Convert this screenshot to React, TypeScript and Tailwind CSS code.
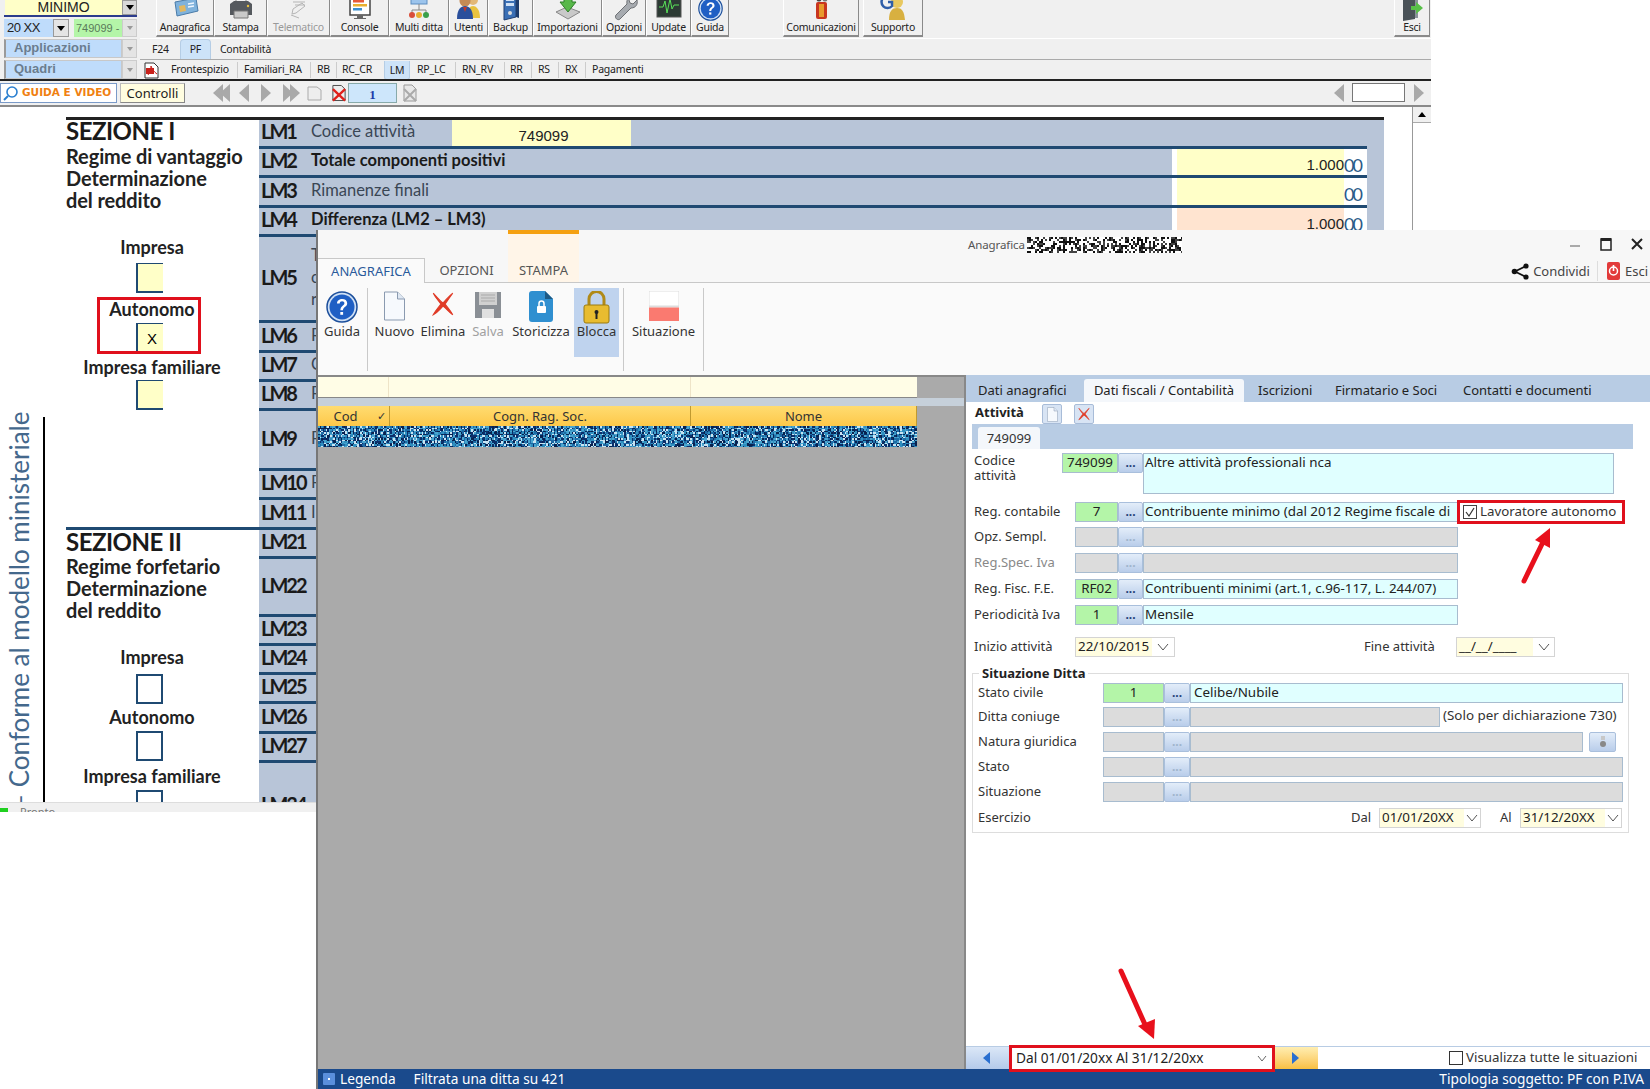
import React, { useMemo } from "react";

function Noise({ w, h, cell, colors, seed, className = "" }: { w: number; h: number; cell: number; colors: string[]; seed: number; className?: string }) {
  const paths = useMemo(() => {
    const d: string[] = colors.map(() => "");
    let s = seed;
    for (let y = 0; y < h; y += cell) {
      for (let x = 0; x < w; x += cell) {
        s = (s * 1103515245 + 12345) & 0x7fffffff;
        const i = (s >> 12) % colors.length;
        d[i] += `M${x} ${y}h${cell}v${cell}h-${cell}z`;
      }
    }
    return d;
  }, [w, h, cell, seed]);
  return (
    <svg width={w} height={h} className={className} shapeRendering="crispEdges">
      {paths.map((p, i) => (
        <path key={i} d={p} fill={colors[i]} />
      ))}
    </svg>
  );
}

const HelpIcon = ({ s = 30 }: { s?: number }) => (
  <svg width={s} height={s} viewBox="0 0 32 32">
    <circle cx="16" cy="16" r="15" fill="#cfe0f5" stroke="#1b4e9b" strokeWidth="1.5" />
    <circle cx="16" cy="16" r="12.5" fill="#1f5fc4" />
    <path d="M11 12.5c0-3 2.4-4.5 5.2-4.5s5 1.500 5 4.200c0 3.600-4.200 3.700-4.200 7h-2.600c0-4.500 4-4.600 4-7 0-1.200-1-1.900-2.300-1.900s-2.400.8-2.400 2.200z" fill="#fff" />
    <rect x="14.300" y="21" width="2.800" height="2.800" fill="#fff" />
  </svg>
);

const tbIcons: Record<string, React.ReactNode> = {
  Anagrafica: (
    <svg width="30" height="24" viewBox="0 0 30 24">
      <path d="M5 5l21-4 2 13-21 5z" fill="#7fb2dc" stroke="#4a7ba8" />
      <path d="M9 9l6-1 1 6-6 1z" fill="#e2b860" />
      <path d="M18 7l6-1M18 10l6-1" stroke="#eef6ff" strokeWidth="1.500" />
    </svg>
  ),
  Stampa: (
    <svg width="28" height="28" viewBox="0 0 28 28">
      <path d="M9 2h10v8H9z" fill="#f2f2f2" stroke="#888" />
      <path d="M3 11l4-3h14l4 3v11H3z" fill="#55595e" />
      <path d="M7 18h14v7H7z" fill="#c9c9c9" stroke="#777" />
      <circle cx="21" cy="13" r="1.200" fill="#e8c040" />
    </svg>
  ),
  Telematico: (
    <svg width="26" height="26" viewBox="0 0 26 26" fill="none" stroke="#b5b5b5">
      <path d="M5 4h10M7 7h12M9 10h10M7 14l9-6 3 3-9 7-4 1z" />
      <path d="M5 20l8 3" />
    </svg>
  ),
  Console: (
    <svg width="26" height="26" viewBox="0 0 26 26">
      <rect x="3" y="2" width="20" height="18" fill="#fff" stroke="#444" strokeWidth="1.500" />
      <rect x="6" y="5" width="11" height="2.500" fill="#e65a3a" />
      <rect x="6" y="9" width="14" height="2.500" fill="#e8b030" />
      <rect x="6" y="13" width="9" height="2.500" fill="#3a8fd0" />
      <path d="M10 20h6v3h3v1H7v-1h3z" fill="#666" />
    </svg>
  ),
  "Multi ditta": (
    <svg width="26" height="28" viewBox="0 0 26 28">
      <rect x="5" y="0" width="16" height="11" fill="#9cc4ec" stroke="#5d8dc0" />
      <path d="M13 11v6M6 20v-3h14v3" stroke="#888" fill="none" />
      <circle cx="6" cy="22" r="3" fill="#d94f3a" />
      <circle cx="13" cy="22" r="3" fill="#e8b030" />
      <circle cx="20" cy="22" r="3" fill="#3aa04a" />
    </svg>
  ),
  Utenti: (
    <svg width="28" height="28" viewBox="0 0 28 28">
      <circle cx="18" cy="7" r="5" fill="#e2b878" />
      <path d="M12 25c0-9 3-12 6-12s7 3 7 12z" fill="#e8c240" />
      <circle cx="10" cy="8" r="5.500" fill="#c48a55" />
      <path d="M6 6c1-4 7-4 8 0z" fill="#4a2a15" />
      <path d="M2 26c0-10 4-13 8-13s8 3 8 13z" fill="#2a4f9c" />
      <path d="M8 14l2 5 2-5z" fill="#c0392b" />
    </svg>
  ),
  Backup: (
    <svg width="22" height="28" viewBox="0 0 22 28">
      <path d="M4 2l12-2v24l-12 3z" fill="#3a6fb5" stroke="#203f70" />
      <path d="M16 0l3 2v23l-3-1z" fill="#1e3c6c" />
      <rect x="6" y="5" width="8" height="3" fill="#cfe0f5" />
      <rect x="6" y="10" width="8" height="3" fill="#cfe0f5" />
      <circle cx="10" cy="20" r="2" fill="#ddd" />
    </svg>
  ),
  Importazioni: (
    <svg width="30" height="28" viewBox="0 0 30 28">
      <path d="M3 19l11-5 13 5-12 7z" fill="#c9c9c9" stroke="#888" />
      <path d="M11 1h8v8h4l-8 10-8-10h4z" fill="#58b84a" stroke="#2f7f2a" />
    </svg>
  ),
  Opzioni: (
    <svg width="28" height="28" viewBox="0 0 28 28">
      <path d="M24 2l-5 5 1 3 3 1 4-4c1 4-1 8-6 8l-11 11c-2 2-6-1-4-4l11-11c-1-5 3-10 7-9z" fill="#a7abb0" stroke="#6d7074" />
    </svg>
  ),
  Update: (
    <svg width="28" height="28" viewBox="0 0 28 28">
      <rect x="2" y="2" width="24" height="22" fill="#2c3a34" stroke="#555" />
      <path d="M4 14h4l2-6 2 12 3-14 2 10 2-4h5" stroke="#58e058" fill="none" />
    </svg>
  ),
  Guida: <HelpIcon s={25} />,
  Comunicazioni: (
    <svg width="20" height="26" viewBox="0 0 20 26">
      <rect x="5" y="7" width="11" height="17" rx="2" fill="#c8361f" />
      <rect x="8" y="9" width="5" height="13" fill="#e89a2c" />
      <circle cx="8" cy="4" r="2.500" fill="#444" />
      <circle cx="14" cy="4" r="2.500" fill="#777" />
    </svg>
  ),
  Supporto: (
    <svg width="30" height="28" viewBox="0 0 30 28">
      <circle cx="19" cy="9" r="6" fill="#e8c860" />
      <path d="M11 27c0-9 3-12 8-12s7 3 8 12z" fill="#d8b040" />
      <path d="M14 5a6 6 0 1 0 0 8v-4h-4" fill="none" stroke="#2f5ea8" strokeWidth="2.500" />
    </svg>
  ),
  Esci: (
    <svg width="24" height="28" viewBox="0 0 24 28">
      <path d="M3 0h12v26l-12 2z" fill="#4a5258" />
      <path d="M15 1h3v24h-3z" fill="#8a9299" />
      <path d="M11 13h5v-4l7 6-7 6v-4h-5z" fill="#58c048" />
    </svg>
  ),
};

function TbBtn({ label, w, gray, cn = "" }: { label: string; w: string; gray?: boolean; cn?: string }) {
  return (
    <div className={`${w} ${cn} h-[37px] flex flex-col items-center justify-end border-l border-white border-r border-r-[#8a8a8a] border-b-2 border-b-[#8a8a8a] bg-[#f0f0f0] relative overflow-hidden`}>
      <div className="absolute left-0 right-0 -top-[10px] h-[31px] flex justify-center items-end">{tbIcons[label]}</div>
      <span className={`relative text-[10.5px] leading-[14px] pb-[1px] whitespace-nowrap tracking-[-0.25px] ${gray ? "text-[#999]" : "text-[#222]"}`}>{label}</span>
    </div>
  );
}

function Side({ label, cn }: { label: string; cn: string }) {
  return (
    <div className={`${cn} flex h-[19px]`}>
      <div className="flex-1 bg-[#bfdcfb] border border-[#c8c8c8] border-l-2 border-l-[#9a9a9a] pl-[8px] text-[13px] leading-[16px] font-bold text-[#6b7d8e]">{label}</div>
      <div className="w-[15px] bg-[#e4e4e4] flex items-center justify-center border border-[#ccc]">
        <span className="w-0 h-0 border-x-[3px] border-x-transparent border-t-[4px] border-t-[#9a9a9a]" />
      </div>
    </div>
  );
}

const Tri = ({ dir, c = "#a9a9a9", cn = "" }: { dir: "l" | "r"; c?: string; cn?: string }) => (
  <svg width="10" height="18" viewBox="0 0 10 18" className={cn}>
    <path d={dir === "l" ? "M10 0v18L0 9z" : "M0 0v18L10 9z"} fill={c} />
  </svg>
);

function Box({ filled, x, cn = "" }: { filled?: boolean; x?: boolean; cn?: string }) {
  return filled ? (
    <div className={`${cn} w-[27px] h-[30px] mr-[5px] bg-[#ffffc8] border-l-2 border-b-2 border-t border-[#1f4a72] text-[15px] leading-[30px] text-center pl-[3px] font-['Liberation_Sans'] font-normal`}>{x ? "X" : ""}</div>
  ) : (
    <div className={`${cn} w-[27px] h-[30px] mr-[5px] border-2 border-[#1f4a72]`} />
  );
}

function Sect({ title, lines, tcn }: { title: string; lines: string[]; tcn: string }) {
  return (
    <div className="flex flex-col">
      <div className={`${tcn} text-[24px] font-bold text-[#1a1a1a] tracking-[-0.5px]`}>{title}</div>
      {lines.map((l) => (
        <div key={l} className="text-[20px] leading-[22px] font-bold text-[#222] tracking-[-0.1px]">{l}</div>
      ))}
    </div>
  );
}

const Lab = ({ t, cn }: { t: string; cn: string }) => (
  <div className={`${cn} text-[18px] leading-[22px] font-bold text-[#222] w-[172px] text-center whitespace-nowrap`}>{t}</div>
);

function FormRow({ h, lm, desc, bold, field, val, tail }: { h: string; lm: string; desc: React.ReactNode; bold?: boolean; field?: string; val?: string; tail?: string }) {
  return (
    <div className={`${h} flex relative w-[1108px] border-b-[3px] border-[#1f4a72] bg-[#b8c5d8]`}>
      <div className="w-[52px] pl-[2px] pb-[3px] text-[20px] leading-[24px] font-bold text-[#1a1a1a] tracking-[-2px] self-center">{lm}</div>
      <div className={`w-[861px] flex-none self-center pb-[3px] text-[16.5px] leading-[22px] whitespace-pre-line ${bold ? "font-bold text-[#1a1a1a]" : "text-[#3a4654]"}`}>{desc}</div>
      {field && (
        <div className="w-[195px] flex-none bg-white pl-[5px] flex items-stretch">
          <div className={`w-[167px] ${field} text-right text-[15px] leading-[28px] pt-[2px] text-[#222] font-['Liberation_Sans'] font-normal`}>{val}</div>
          <div className="text-[#2a5a88] text-[18px] leading-[28px] pt-[2px] tracking-[-2px] font-normal">{tail}</div>
        </div>
      )}
    </div>
  );
}

function Code({ w, t, off }: { w: string; t?: string; off?: boolean }) {
  return (
    <div className={`${w} h-[20px] border border-[#a8bccf] text-[13.4px] leading-[17px] text-center text-[#222] ${off ? "bg-[#dcdcdc]" : "bg-[#b4f5a8]"}`}>{t}</div>
  );
}
const Dots = ({ off, w = "w-[26px]" }: { off?: boolean; w?: string }) => (
  <div className={`${w} h-[20px] rounded-[2px] border border-[#a9bfdc] bg-gradient-to-b from-[#e3edf9] to-[#b9cdea] text-[12px] leading-[18px] text-center font-bold ${off ? "text-[#9fb4cc]" : "text-[#1f3f78]"}`}>...</div>
);

const fieldCn = "h-[20px] border border-[#a8bccf] text-[13.4px] leading-[17px] pl-[1px] text-[#222] whitespace-nowrap overflow-hidden";

function Row({ label, code, off, desc, gray, mt }: { label: string; code?: string; off?: boolean; desc?: string; gray?: boolean; mt: string }) {
  return (
    <div className={`flex ${mt} h-[20px] items-start`}>
      <div className={`w-[101px] text-[13px] leading-[18px] ${gray ? "text-[#888]" : "text-[#333]"}`}>{label}</div>
      <Code w="w-[43px]" t={code} off={off} />
      <Dots off={off} w="w-[25px]" />
      <div className={`w-[315px] ${fieldCn} ${off ? "bg-[#dcdcdc]" : "bg-[#e0ffff]"}`}>{desc}</div>
    </div>
  );
}

function DateBox({ t, w, fill }: { t: string; w: string; fill: string }) {
  return (
    <div className={`${w} h-[20px] flex border border-[#d4d4d4] bg-white`}>
      <div className={`${fill} bg-[#fffde0] text-[13.4px] leading-[17px] pl-[2px] whitespace-nowrap text-[#222]`}>{t}</div>
      <div className="flex-1 flex items-center justify-center">
        <svg width="12" height="8" viewBox="0 0 12 8"><path d="M1 1l5 6 5-6" fill="none" stroke="#555" /></svg>
      </div>
    </div>
  );
}

const PageIcon = ({ w = 22, h = 30 }: { w?: number; h?: number }) => (
  <svg width={w} height={h} viewBox="0 0 22 30">
    <path d="M1 1h13l7 7v21H1z" fill="#f6f9fd" stroke="#8a9ab0" />
    <path d="M14 1v7h7" fill="#dfe8f3" stroke="#8a9ab0" />
  </svg>
);
const RedX = ({ s = 24 }: { s?: number }) => (
  <svg width={s} height={s} viewBox="0 0 24 24">
    <path d="M3 2c4 4 6 7 9 9 3-3 5-6 9-9-3 4-5 7-7 10 2 3 5 6 7 10-4-3-6-6-9-8-3 3-5 6-9 8 2-4 5-7 7-10-2-3-5-6-7-10z" fill="#e03c28" stroke="#e03c28" />
  </svg>
);

function Rib({ w, ml, label, gray, hi, icon }: { w: string; ml: string; label: string; gray?: boolean; hi?: boolean; icon: React.ReactNode }) {
  return (
    <div className={`${w} ${ml} h-[69px] flex flex-col items-center ${hi ? "bg-[#bfd3ee]" : ""}`}>
      <div className="h-[35px] pt-[3px] flex items-start justify-center">{icon}</div>
      <div className={`text-[13px] leading-[16px] whitespace-nowrap ${gray ? "text-[#a0a0a0]" : "text-[#333]"}`}>{label}</div>
    </div>
  );
}
const RibSep = ({ ml }: { ml: string }) => <div className={`${ml} w-px h-[83px] bg-[#c9c9c9]`} />;

const QSep = () => <span className="w-px h-[16px] bg-[#ccc]" />;

export default function App() {
  const blueNoise = ["#0b2f6b", "#1d6aa5", "#2f8fc0", "#c9e4f2", "#08224f", "#4aa5cf"];
  return (
    <div className="relative w-[1650px] h-[1089px] overflow-hidden bg-white font-['Noto_Sans',sans-serif]">
      {/* Back window */}
      <div className="w-[1431px] h-[812px] flex flex-col overflow-hidden bg-[#f0f0f0]">
        <div className="flex h-[79px]">
          <div className="w-[140px] flex-none flex flex-col pl-[4px] pr-[3px] font-['Liberation_Sans']">
            <div className="flex h-[17px] border-b-2 border-[#2c3c8c]">
              <div className="w-[118px] ml-[1px] bg-[#ffffc8] text-center text-[14px] leading-[15px] text-[#222]">MINIMO</div>
              <div className="w-[15px] bg-[#d8d8d8] border border-[#999] flex items-center justify-center">
                <span className="w-0 h-0 border-x-[4px] border-x-transparent border-t-[5px] border-t-black" />
              </div>
            </div>
            <div className="flex h-[18px] mt-[2px]">
              <div className="w-[49px] bg-[#bfdcfb] text-[13px] leading-[18px] tracking-[-0.5px] pl-[3px] text-[#222]">20 XX</div>
              <div className="w-[16px] bg-[#e4e4e4] border border-[#999] flex items-center justify-center">
                <span className="w-0 h-0 border-x-[4px] border-x-transparent border-t-[5px] border-t-black" />
              </div>
              <div className="ml-[5px] w-[48px] bg-[#b4f5a8] text-[11px] leading-[18px] pl-[2px] text-[#5a7a5a] overflow-hidden whitespace-nowrap">749099 -</div>
              <div className="w-[15px] bg-[#e4e4e4] border border-[#ccc] flex items-center justify-center">
                <span className="w-0 h-0 border-x-[3px] border-x-transparent border-t-[4px] border-t-[#9a9a9a]" />
              </div>
            </div>
            <Side label="Applicazioni" cn="mt-[2px]" />
            <Side label="Quadri" cn="mt-[2px]" />
          </div>
          <div className="flex-1 flex flex-col">
            <div className="h-[39px] flex border-b border-white pl-[16px] pr-[1px] text-[#222]">
              <TbBtn label="Anagrafica" w="w-[58px]" />
              <TbBtn label="Stampa" w="w-[53px]" />
              <TbBtn label="Telematico" w="w-[63px]" gray />
              <TbBtn label="Console" w="w-[59px]" />
              <TbBtn label="Multi ditta" w="w-[60px]" />
              <TbBtn label="Utenti" w="w-[39px]" />
              <TbBtn label="Backup" w="w-[45px]" />
              <TbBtn label="Importazioni" w="w-[69px]" />
              <TbBtn label="Opzioni" w="w-[44px]" />
              <TbBtn label="Update" w="w-[45px]" />
              <TbBtn label="Guida" w="w-[38px]" />
              <TbBtn label="Comunicazioni" w="w-[76px]" cn="ml-[54px]" />
              <TbBtn label="Supporto" w="w-[60px]" cn="ml-[4px]" />
              <TbBtn label="Esci" w="w-[36px]" cn="ml-auto" />
            </div>
            <div className="h-[21px] flex items-end border-b border-[#aaa] text-[10.5px] text-[#222] pl-[12px] tracking-[-0.2px]">
              <span className="leading-[19px]">F24</span>
              <span className="ml-[11px] w-[31px] h-[20px] bg-[#cde3f8] border border-[#b5cde5] border-b-0 rounded-t-[4px] text-center leading-[19px]">PF</span>
              <span className="ml-[9px] leading-[19px]">Contabilità</span>
            </div>
            <div className="h-[19px] flex items-center text-[10.5px] text-[#222] tracking-[-0.2px] pt-[1px]">
              <svg width="16" height="17" viewBox="0 0 16 17" className="ml-[3px]">
                <path d="M2 1h9l4 4v11H2z" fill="#fff" stroke="#333" />
                <path d="M3 6h8v6H3z" fill="#c8201a" />
                <path d="M5 13c2-3 3-6 3-9 1 3 3 6 6 8" fill="none" stroke="#c8201a" />
              </svg>
              <span className="ml-[12px] w-[66px]">Frontespizio</span>
              <QSep />
              <span className="ml-[6px] w-[66px]">Familiari_RA</span>
              <QSep />
              <span className="ml-[6px] w-[19px]">RB</span>
              <QSep />
              <span className="ml-[5px] w-[42px]">RC_CR</span>
              <span className="w-[26px] h-[19px] bg-[#cde3f8] border border-[#b5cde5] border-t-0 rounded-b-[3px] text-center leading-[18px]">LM</span>
              <span className="ml-[7px] w-[38px]">RP_LC</span>
              <QSep />
              <span className="ml-[6px] w-[42px]">RN_RV</span>
              <QSep />
              <span className="ml-[5px] w-[21px]">RR</span>
              <QSep />
              <span className="ml-[6px] w-[20px]">RS</span>
              <QSep />
              <span className="ml-[6px] w-[20px]">RX</span>
              <QSep />
              <span className="ml-[6px]">Pagamenti</span>
            </div>
          </div>
        </div>
        <div className="h-[2px] bg-[#222]" />
        <div className="h-[24px] flex items-center">
          <div className="w-[117px] h-[20px] bg-white border border-[#7a9ac8] flex items-center pl-[2px]">
            <svg width="16" height="16" viewBox="0 0 16 16"><circle cx="9" cy="7" r="5" fill="#fff" stroke="#2a7fd0" strokeWidth="1.600" /><path d="M5 11l-4 4" stroke="#2a7fd0" strokeWidth="2" /></svg>
            <span className="ml-[3px] font-['DejaVu_Sans'] text-[10.5px] font-bold text-[#f08010] whitespace-nowrap">GUIDA E VIDEO</span>
          </div>
          <div className="ml-[3px] w-[65px] h-[20px] bg-[#fffde0] border border-[#bbb] border-r-[#888] border-b-[#888] text-[13px] leading-[18px] text-center text-[#222]">Controlli</div>
          <div className="ml-[28px] flex items-center">
            <Tri dir="l" /><Tri dir="l" cn="-ml-[3px]" />
            <Tri dir="l" cn="ml-[9px]" />
            <Tri dir="r" cn="ml-[12px]" />
            <Tri dir="r" cn="ml-[12px]" /><Tri dir="r" cn="-ml-[3px]" />
            <svg width="15" height="17" viewBox="0 0 15 17" className="ml-[7px]"><path d="M1 3h9l4 3v10H1z" fill="#eee" stroke="#aaa" /></svg>
            <svg width="16" height="18" viewBox="0 0 17 18" className="ml-[9px]"><path d="M2 1h9l4 4v12H2z" fill="#eee" stroke="#444" /><path d="M2 5l13 12M15 5L2 17" stroke="#e0201a" strokeWidth="2.500" /></svg>
          </div>
          <div className="ml-[1px] w-[49px] h-[20px] bg-[#cde6fb] border border-[#8aa] text-center text-[13px] leading-[21px] font-bold text-[#1a3aa8] font-['Liberation_Serif']">1</div>
          <svg width="16" height="18" viewBox="0 0 16 18" className="ml-[5px]"><path d="M2 1h8l4 4v12H2z" fill="#e8e8e8" stroke="#999" /><path d="M2 5l12 12M14 5L2 17" stroke="#aaa" strokeWidth="2" /></svg>
          <div className="ml-auto flex items-center pr-[7px]">
            <Tri dir="l" />
            <div className="ml-[8px] w-[53px] h-[19px] bg-white border border-[#777]" />
            <Tri dir="r" cn="ml-[9px]" />
          </div>
        </div>
        <div className="h-[2px] bg-[#8a8a8a]" />

        {/* Form */}
        <div className="flex h-[697px] overflow-hidden bg-white">
          <div className="w-[66px] flex-none pt-[310px] flex justify-between pl-[6px] pr-[21px] overflow-hidden">
            <div className="[writing-mode:vertical-rl] rotate-180 h-[392px] text-[26px] leading-[26px] text-[#44688c] font-['Lato'] whitespace-nowrap text-left">– Conforme al modello ministeriale</div>
            <div className="w-[2px] h-[400px] bg-black" />
          </div>
          <div className="w-[1318px] flex-none pt-[10px] font-['Lato']">
            <div className="h-[3px] bg-[#222]" />
            <div className="flex">
              <div className="w-[193px] flex-none flex flex-col">
                <div className="h-[407px] flex flex-col items-start">
                  <Sect title="SEZIONE I" tcn="-mt-[3px] leading-[28px]" lines={["Regime di vantaggio", "Determinazione", "del reddito"]} />
                  <div className="flex flex-col items-center w-[172px]">
                    <Lab t="Impresa" cn="mt-[25px]" />
                    <Box filled cn="mt-[5px]" />
                    <Lab t="Autonomo" cn="mt-[5px]" />
                    <Box filled x cn="mt-[3px]" />
                    <Lab t="Impresa familiare" cn="mt-[3px]" />
                    <Box filled cn="mt-[2px]" />
                  </div>
                </div>
                <div className="h-[3px] -mr-[60px] bg-[#1f4a72]" />
                <div className="flex flex-col items-start">
                  <Sect title="SEZIONE II" tcn="-mt-[1px] leading-[26px]" lines={["Regime forfetario", "Determinazione", "del reddito"]} />
                  <div className="flex flex-col items-center w-[172px]">
                    <Lab t="Impresa" cn="mt-[25px]" />
                    <Box cn="mt-[6px]" />
                    <Lab t="Autonomo" cn="mt-[2px]" />
                    <Box cn="mt-[3px]" />
                    <Lab t="Impresa familiare" cn="mt-[4px]" />
                    <Box cn="mt-[3px]" />
                  </div>
                </div>
              </div>
              <div className="w-[1125px] flex-none bg-[#b8c5d8] flex flex-col overflow-hidden">
                <div className="h-[29px] flex relative w-[1108px] border-b-[3px] border-[#1f4a72]">
                  <div className="w-[52px] pl-[2px] pb-[3px] text-[20px] leading-[24px] font-bold text-[#1a1a1a] tracking-[-2px] self-center">LM1</div>
                  <div className="w-[141px] text-[16.5px] leading-[22px] pb-[3px] text-[#3a4654] self-center">Codice attività</div>
                  <div className="w-[179px] pl-[4px] bg-[#ffffc8] text-center text-[15px] leading-[28px] pt-[2px] text-[#222] font-['Liberation_Sans'] font-normal">749099</div>
                </div>
                <FormRow h="h-[29px]" lm="LM2" desc="Totale componenti positivi" bold field="bg-[#ffffc8]" val="1.000" tail="00" />
                <FormRow h="h-[30px]" lm="LM3" desc="Rimanenze finali" field="bg-[#ffffc8]" tail="00" />
                <FormRow h="h-[29px]" lm="LM4" desc="Differenza (LM2 – LM3)" bold field="bg-[#ffe4d0]" val="1.000" tail="00" />
                <FormRow h="h-[86px]" lm="LM5" desc={"Totale\ncontributi\nricavi"} />
                <FormRow h="h-[30px]" lm="LM6" desc="Reddito" />
                <FormRow h="h-[29px]" lm="LM7" desc="Contributi" />
                <FormRow h="h-[29px]" lm="LM8" desc="Reddito" />
                <FormRow h="h-[60px]" lm="LM9" desc="Reddito" />
                <FormRow h="h-[29px]" lm="LM10" desc="Reddito" />
                <FormRow h="h-[30px]" lm="LM11" desc="Imposta" />
                <FormRow h="h-[29px]" lm="LM21" desc="" />
                <FormRow h="h-[58px]" lm="LM22" desc="" />
                <FormRow h="h-[29px]" lm="LM23" desc="" />
                <FormRow h="h-[29px]" lm="LM24" desc="" />
                <FormRow h="h-[29px]" lm="LM25" desc="" />
                <FormRow h="h-[30px]" lm="LM26" desc="" />
                <FormRow h="h-[29px]" lm="LM27" desc="" />
                <div className="h-[44px] pl-[2px] pt-[28px] text-[20px] leading-[26px] font-bold text-[#1a1a1a] tracking-[-2px]">LM34</div>
              </div>
            </div>
          </div>
          <div className="w-[28px] flex-none" />
          <div className="w-[19px] flex-none border-l border-[#999] bg-white flex flex-col">
            <div className="h-[16px] bg-[#f0f0f0] border-b border-[#aaa] flex items-center justify-center">
              <span className="w-0 h-0 border-x-[4px] border-x-transparent border-b-[5px] border-b-black" />
            </div>
          </div>
        </div>
        <div className="h-[10px] flex bg-[#f0f0f0] border-t border-[#ddd] overflow-hidden">
          <div className="w-[8px] h-[4px] mt-[5px] bg-[#20d020]" />
          <span className="ml-[12px] text-[11px] leading-[14px] text-[#777] mt-[2px]">Pronto</span>
        </div>
      </div>

      {/* Red highlight on Autonomo */}
      <div className="absolute left-[97px] top-[297px] w-[104px] h-[57px] border-[3px] border-[#e0101c]" />

      {/* Front window */}
      <div className="absolute left-[316px] top-[230px] w-[1334px] h-[859px] flex flex-col border-l-2 border-l-[#777] bg-[#f7f7f7] text-[#333]">
        <div className="relative h-[53px] flex border-b border-[#c8c8c8]">
          <div className="mt-[28px] w-[107px] h-[25px] bg-[#fafafa] border border-[#c8c8c8] border-b-0 border-l-0 text-[13px] leading-[24px] text-center text-[#2a5a9a] -mb-px z-10">ANAGRAFICA</div>
          <div className="w-[83px] mt-[28px] text-[13px] leading-[25px] text-center text-[#555]">OPZIONI</div>
          <div className="w-[71px] border-t-4 border-[#f5a010] bg-[#fff5e8] flex items-end justify-center text-[13px] leading-[24px] text-[#555]">STAMPA</div>
          <div className="absolute top-[6px] left-[650px] flex items-center">
            <span className="text-[11.500px] leading-[17px] text-[#555] tracking-[-0.1px]">Anagrafica</span>
            <Noise w={155} h={16} cell={2} colors={["#111", "#fff", "#fff", "#444"]} seed={77} className="ml-[2px]" />
          </div>
          <div className="absolute top-[6px] right-[7px] flex items-center gap-[19px]">
            <svg width="11" height="16" viewBox="0 0 11 16"><rect x="0" y="9" width="10" height="2" fill="#aaa" /></svg>
            <svg width="12" height="14" viewBox="0 0 12 14"><rect x="1" y="2" width="10" height="11" fill="none" stroke="#222" strokeWidth="1.500" /><rect x="1" y="1" width="10" height="3" fill="#222" /></svg>
            <svg width="12" height="12" viewBox="0 0 12 12"><path d="M1 1l10 10M11 1L1 11" stroke="#222" strokeWidth="2" /></svg>
          </div>
          <div className="ml-auto mt-[31px] h-[20px] flex items-center pr-[2px]">
            <svg width="18" height="17" viewBox="0 0 18 17"><path d="M15 3L4 8.500 15 14" fill="none" stroke="#111" strokeWidth="1.800" /><circle cx="15" cy="3" r="2.600" fill="#111" /><circle cx="15" cy="14" r="2.600" fill="#111" /><circle cx="3.500" cy="8.500" r="2.800" fill="#111" /></svg>
            <span className="ml-[4px] text-[13px] text-[#444] leading-[18px]">Condividi</span>
            <span className="ml-[7px] w-px h-[20px] bg-[#ddd]" />
            <svg width="15" height="20" viewBox="0 0 15 20" className="ml-[8px]"><rect x="1" y="1" width="13" height="18" rx="2" fill="#e23a3a" /><circle cx="7.500" cy="10" r="4" fill="none" stroke="#fff" strokeWidth="1.500" /><rect x="6.700" y="4" width="1.600" height="6" fill="#fff" /></svg>
            <span className="ml-[4px] text-[13px] text-[#444] leading-[18px]">Esci</span>
          </div>
        </div>
        {/* Ribbon */}
        <div className="h-[92px] flex bg-[#fafafa] pt-[5px] items-start">
          <Rib w="w-[36px]" ml="ml-[6px]" label="Guida" icon={<HelpIcon s={32} />} />
          <RibSep ml="ml-[7px]" />
          <Rib w="w-[39px]" ml="ml-[7px]" label="Nuovo" icon={<PageIcon w={23} h={30} />} />
          <Rib w="w-[44px]" ml="ml-[7px]" label="Elimina" icon={<RedX s={26} />} />
          <Rib w="w-[34px]" ml="ml-[6px]" label="Salva" gray icon={
            <svg width="28" height="28" viewBox="0 0 28 28"><path d="M1 1h26v26H1z" fill="#8a8f95" /><rect x="5" y="1" width="18" height="13" fill="#d0d0d0" /><path d="M7 4h14M7 7h14M7 10h14" stroke="#aaa" /><rect x="8" y="18" width="12" height="9" fill="#e0e0e0" /></svg>
          } />
          <Rib w="w-[60px]" ml="ml-[6px]" label="Storicizza" icon={
            <svg width="25" height="31" viewBox="0 0 25 31"><path d="M3 0h13l8 8v20a3 3 0 0 1-3 3H3a3 3 0 0 1-3-3V3a3 3 0 0 1 3-3z" fill="#2f8fd0" /><path d="M16 0l8 8h-8z" fill="#1d5a85" /><rect x="8" y="15" width="9" height="7" rx="1" fill="#fff" /><path d="M10 15v-2.500a2.500 2.500 0 0 1 5 0V15" fill="none" stroke="#fff" strokeWidth="1.500" /></svg>
          } />
          <Rib w="w-[45px]" ml="ml-[3px]" hi label="Blocca" icon={
            <svg width="27" height="33" viewBox="0 0 27 33"><path d="M6 15V8a7.500 7.500 0 0 1 15 0v7" fill="none" stroke="#b08a18" strokeWidth="3" /><rect x="1" y="14" width="25" height="18" rx="2" fill="#e8bc30" stroke="#9a7a10" /><circle cx="13.500" cy="21" r="2" fill="#222" /><rect x="12.500" y="21" width="2" height="7" fill="#222" /></svg>
          } />
          <RibSep ml="ml-[4px]" />
          <Rib w="w-[65px]" ml="ml-[7px]" label="Situazione" icon={
            <svg width="30" height="30" viewBox="0 0 30 30"><rect x="0" y="0" width="30" height="15" fill="#fff" stroke="#ddd" /><rect x="0" y="15" width="30" height="1.500" fill="#ddd" /><rect x="0" y="16.500" width="30" height="13.500" fill="#fa7a70" /></svg>
          } />
          <RibSep ml="ml-[7px]" />
        </div>
        {/* Main */}
        <div className="flex h-[694px]">
          <div className="w-[648px] flex-none bg-[#aaaaaa] flex flex-col border-t-2 border-t-[#888] border-r-2 border-r-[#888]">
            <div className="h-[21px] w-[599px] bg-[#fffde6] flex border-b border-[#888]">
              <div className="w-[71px] border-r border-[#eee4c8]" />
              <div className="w-[302px] border-r border-[#eee4c8]" />
            </div>
            <div className="h-[8px] bg-[#c6d0da]" />
            <div className="w-[599px] h-[20px] flex bg-gradient-to-b from-[#ffdc70] to-[#fdc848] text-[13px] leading-[20px] text-[#333] border-r border-[#c09a30]">
              <div className="w-[55px] text-center">Cod</div>
              <div className="w-[16px] text-center text-[11px]">✓</div>
              <div className="w-[302px] border-x border-[#c09a30] text-center">Cogn. Rag. Soc.</div>
              <div className="flex-1 text-center">Nome</div>
            </div>
            <Noise w={599} h={21} cell={1.5} colors={blueNoise} seed={123} />
          </div>
          <div className="flex-1 bg-white flex flex-col min-w-0">
            <div className="h-[27px] bg-[#b8cce4] flex items-end text-[13px] text-[#222] pl-[12px]">
              <span className="leading-[23px] w-[106px]">Dati anagrafici</span>
              <span className="w-[160px] h-[23px] bg-[#f4f7fb] rounded-t-[3px] leading-[23px] text-center">Dati fiscali / Contabilità</span>
              <span className="ml-[14px] leading-[23px] w-[77px]">Iscrizioni</span>
              <span className="leading-[23px] w-[128px]">Firmatario e Soci</span>
              <span className="leading-[23px]">Contatti e documenti</span>
            </div>
            <div className="h-[22px] flex items-start pl-[9px] pt-[2px]">
              <span className="w-[67px] text-[13px] leading-[17px] font-bold text-[#222]">Attività</span>
              <div className="w-[20px] h-[20px] bg-[#d8e4f4] border border-[#a8bcd8] rounded-[2px] flex items-center justify-center"><PageIcon w={11} h={15} /></div>
              <div className="ml-[12px] w-[20px] h-[20px] bg-[#d8e4f4] border border-[#a8bcd8] rounded-[2px] flex items-center justify-center"><RedX s={14} /></div>
            </div>
            <div className="ml-[6px] w-[661px] h-[25px] bg-[#b8cce4] flex items-end pl-[6px]">
              <span className="w-[62px] h-[22px] bg-[#f4f7fb] rounded-t-[3px] text-[13px] leading-[22px] text-center text-[#333]">749099</span>
            </div>
            <div className="pl-[8px]">
              <div className="flex mt-[4px] h-[41px] items-start">
                <div className="w-[88px] text-[13px] leading-[15px] text-[#333]">Codice<br />attività</div>
                <Code w="w-[56px]" t="749099" />
                <Dots w="w-[25px]" />
                <div className={`w-[471px] bg-[#e0ffff] ${fieldCn} !h-[41px]`}>Altre attività professionali nca</div>
              </div>
              <div className="flex mt-[8px] h-[20px] items-start">
                <div className="w-[101px] text-[13px] leading-[18px] text-[#333]">Reg. contabile</div>
                <Code w="w-[43px]" t="7" />
                <Dots w="w-[25px]" />
                <div className={`w-[315px] bg-[#e0ffff] ${fieldCn}`}>Contribuente minimo (dal 2012 Regime fiscale di</div>
                <div className="relative ml-[-1px] -mt-[2px] w-[168px] h-[24px] border-[3px] border-[#e0101c] flex items-center pl-[3px] bg-white">
                  <span className="w-[14px] h-[14px] border border-[#444] flex items-center justify-center">
                    <svg width="12" height="12" viewBox="0 0 12 12"><path d="M2 6l3 4 5-8" fill="none" stroke="#333" strokeWidth="1.200" /></svg>
                  </span>
                  <span className="ml-[3px] text-[13.3px] text-[#333] whitespace-nowrap">Lavoratore autonomo</span>
                </div>
              </div>
              <Row mt="mt-[5px]" label="Opz. Sempl." off />
              <Row mt="mt-[6px]" label="Reg.Spec. Iva" off gray />
              <Row mt="mt-[6px]" label="Reg. Fisc. F.E." code="RF02" desc="Contribuenti minimi (art.1, c.96-117, L. 244/07)" />
              <Row mt="mt-[6px]" label="Periodicità Iva" code="1" desc="Mensile" />
              <div className="flex mt-[12px] items-center text-[13px] text-[#333]">
                <div className="w-[101px]">Inizio attività</div>
                <DateBox t="22/10/2015" w="w-[100px]" fill="w-[76px]" />
                <div className="ml-[189px] w-[92px]">Fine attività</div>
                <DateBox t="__/__/____" w="w-[99px]" fill="w-[76px]" />
              </div>
            </div>
            <div className="relative ml-[6px] mt-[16px] w-[657px] h-[160px] border border-[#ddd] px-[5px] pt-[9px]">
              <div className="absolute -top-[9px] left-[6px] bg-white px-[3px] text-[13px] leading-[17px] font-bold text-[#222]">Situazione Ditta</div>
              <div className="flex h-[20px] items-start">
                <div className="w-[125px] text-[13px] leading-[18px] text-[#333]">Stato civile</div>
                <Code w="w-[61px]" t="1" />
                <Dots />
                <div className={`w-[433px] bg-[#e0ffff] ${fieldCn} !pl-[3px]`}>Celibe/Nubile</div>
              </div>
              <div className="flex mt-[4px] h-[20px] items-start">
                <div className="w-[125px] text-[13px] leading-[18px] text-[#333]">Ditta coniuge</div>
                <Code w="w-[61px]" off />
                <Dots off />
                <div className="w-[250px] h-[20px] bg-[#dcdcdc] border border-[#a8bccf]" />
                <div className="ml-[3px] text-[13.4px] leading-[17px] text-[#333] whitespace-nowrap">(Solo per dichiarazione 730)</div>
              </div>
              <div className="flex mt-[5px] h-[20px] items-start">
                <div className="w-[125px] text-[13px] leading-[18px] text-[#333]">Natura giuridica</div>
                <Code w="w-[61px]" off />
                <Dots off />
                <div className="w-[393px] h-[20px] bg-[#dcdcdc] border border-[#a8bccf]" />
                <div className="ml-[6px] w-[27px] h-[20px] rounded-[2px] border border-[#a9bfdc] bg-gradient-to-b from-[#e3edf9] to-[#b9cdea] flex items-center justify-center">
                  <svg width="10" height="14" viewBox="0 0 10 14"><rect x="3" y="1" width="4" height="4" fill="#c8c8c8" /><circle cx="5" cy="9" r="3" fill="#888" /></svg>
                </div>
              </div>
              <div className="flex mt-[5px] h-[20px] items-start">
                <div className="w-[125px] text-[13px] leading-[18px] text-[#333]">Stato</div>
                <Code w="w-[61px]" off />
                <Dots off />
                <div className="w-[433px] h-[20px] bg-[#dcdcdc] border border-[#a8bccf]" />
              </div>
              <div className="flex mt-[5px] h-[20px] items-start">
                <div className="w-[125px] text-[13px] leading-[18px] text-[#333]">Situazione</div>
                <Code w="w-[61px]" off />
                <Dots off />
                <div className="w-[433px] h-[20px] bg-[#dcdcdc] border border-[#a8bccf]" />
              </div>
              <div className="flex mt-[6px] h-[20px] items-center text-[13px] text-[#333]">
                <div className="w-[373px]">Esercizio</div>
                <div className="w-[28px]">Dal</div>
                <DateBox t="01/01/20XX" w="w-[102px]" fill="w-[84px]" />
                <div className="ml-[19px] w-[20px]">Al</div>
                <DateBox t="31/12/20XX" w="w-[102px]" fill="w-[84px]" />
              </div>
            </div>
            <div className="flex-1" />
            <div className="h-[23px] flex items-center border-t border-[#b8cce4] bg-white">
              <div className="w-[43px] h-[22px] bg-gradient-to-b from-[#dbe7f7] to-[#b4caea] flex items-center justify-center pr-[2px]">
                <svg width="10" height="14" viewBox="0 0 10 14"><path d="M8 1v12L1 7z" fill="#2a6fd0" /></svg>
              </div>
              <div className="relative z-10 -my-[2px] w-[266px] h-[27px] border-[3px] border-[#e0101c] bg-white flex items-center pl-[4px] text-[13.7px] text-[#222]">
                <span>Dal 01/01/20xx Al 31/12/20xx</span>
                <svg width="10" height="7" viewBox="0 0 10 7" className="ml-auto mr-[5px]"><path d="M1 1l4 5 4-5" fill="none" stroke="#666" /></svg>
              </div>
              <div className="w-[43px] h-[22px] bg-gradient-to-b from-[#ffeeb0] to-[#f9c040] flex items-center justify-center pr-[4px]">
                <svg width="10" height="14" viewBox="0 0 10 14"><path d="M2 1v12l7-6z" fill="#2a6fd0" /></svg>
              </div>
              <div className="ml-[131px] w-[14px] h-[14px] border border-[#333] bg-white" />
              <span className="ml-[3px] text-[13.3px] text-[#333] whitespace-nowrap">Visualizza tutte le situazioni</span>
            </div>
          </div>
        </div>
        <div className="h-[20px] flex-none bg-[#1a4a8c] flex items-center text-white text-[13.7px] pl-[4px] pr-[6px]">
          <svg width="14" height="14" viewBox="0 0 14 14"><rect x="1" y="1" width="12" height="12" rx="1" fill="#5a8fdc" /><rect x="6" y="6" width="2" height="2" fill="#fff" /></svg>
          <span className="ml-[4px]">Legenda</span>
          <span className="ml-[18px]">Filtrata una ditta su 421</span>
          <span className="ml-auto">Tipologia soggetto: PF con P.IVA</span>
        </div>
      </div>

      {/* Red arrows */}
      <svg className="absolute left-[1510px] top-[520px]" width="60" height="70" viewBox="0 0 60 70">
        <path d="M14 61L33 22" stroke="#e8101c" strokeWidth="5" strokeLinecap="round" />
        <path d="M40 8L25 20l15 8z" fill="#e8101c" />
      </svg>
      <svg className="absolute left-[1110px] top-[960px]" width="60" height="85" viewBox="0 0 60 85">
        <path d="M11 11l26 58" stroke="#e8101c" strokeWidth="5" strokeLinecap="round" />
        <path d="M44 79L28 66l17-7z" fill="#e8101c" />
      </svg>
    </div>
  );
}
